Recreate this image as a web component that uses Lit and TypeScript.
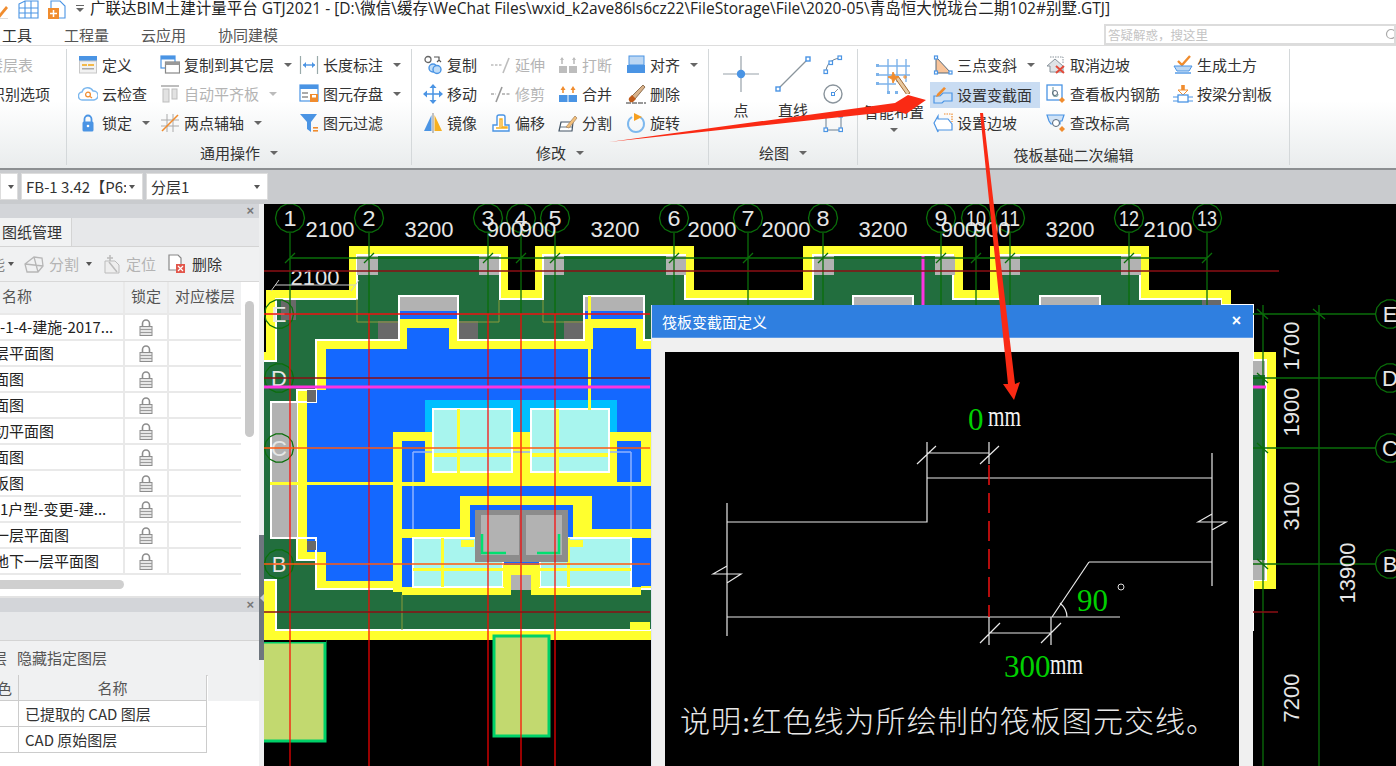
import { LitElement, html, svg, css } from "lit";
import { customElement } from "lit/decorators.js";
import { classMap } from "lit/directives/class-map.js";

const CJK = css`"Noto Sans CJK SC", "Liberation Sans", sans-serif`;

/* ------------------------------ ribbon icons ------------------------------ */
const BL = "#4a94e4";
const OR = "#f08c2e";
const GR = "#bdbdbd";

const ICONS: Record<string, unknown> = {
  def: svg`<rect x="1" y="1" width="18" height="5" fill="${BL}"/><rect x="1.5" y="6" width="17" height="12" fill="#f2f2f2" stroke="#c8c8c8"/><rect x="4" y="9" width="5" height="2" fill="#f3b94a"/><rect x="10" y="9" width="6" height="2" fill="#f3b94a"/><rect x="4" y="13" width="12" height="1.5" fill="#aaa"/>`,
  cloud: svg`<path d="M5 16 a4 4 0 0 1 -1 -8 a6 6 0 0 1 11 -1 a4.5 4.5 0 0 1 1 9 z" fill="#fff" stroke="#7db8ee" stroke-width="1.5"/><circle cx="10" cy="10.5" r="2.4" fill="none" stroke="${OR}" stroke-width="1.2"/><path d="M12 12.5 l2 1.5" stroke="${OR}" stroke-width="1.2"/>`,
  lock: svg`<path d="M6.5 9 V6 a3.5 3.5 0 0 1 7 0 V9" fill="none" stroke="${BL}" stroke-width="1.8"/><rect x="4.5" y="8.5" width="11" height="10" rx="1.5" fill="${BL}"/><circle cx="10" cy="13" r="1.3" fill="#fff"/>`,
  copyfloor: svg`<rect x="1" y="1" width="14" height="12" fill="#fff" stroke="${BL}" stroke-width="1.2"/><rect x="1" y="1" width="14" height="3.5" fill="${BL}"/><rect x="5.5" y="7" width="14" height="11" fill="#fff" stroke="#888" stroke-width="1.2"/><rect x="5.5" y="7" width="14" height="3" fill="#999"/>`,
  autoflush: svg`<rect x="1" y="1" width="18" height="2" fill="${GR}"/><rect x="3" y="5" width="6" height="13" fill="#e2e2e2" stroke="${GR}"/><rect x="12" y="5" width="5" height="10" fill="#e2e2e2" stroke="${GR}"/>`,
  twopoint: svg`<path d="M1 7 H19 M1 13 H19 M7 1 V19 M13 1 V19" stroke="#aaa" stroke-width="1"/><path d="M2 18 L18 2" stroke="${OR}" stroke-width="1.6"/>`,
  dimlen: svg`<path d="M1.5 1 V19 M18.5 1 V19" stroke="#9aa" stroke-width="1.2"/><path d="M4 10 H16" stroke="${BL}" stroke-width="1.4"/><path d="M4 10 l3 -3 v6 z M16 10 l-3 -3 v6 z" fill="${BL}"/>`,
  save: svg`<rect x="1" y="1" width="18" height="16" fill="#fff" stroke="${BL}" stroke-width="1.2"/><rect x="1" y="1" width="18" height="4" fill="${BL}"/><rect x="3" y="8" width="6" height="2" fill="#aaa"/><rect x="3" y="12" width="6" height="2" fill="#aaa"/><rect x="11" y="10" width="8" height="8" fill="${OR}"/><rect x="13" y="11" width="4" height="2.5" fill="#fff"/>`,
  filter: svg`<path d="M1 1 H18 L12 9 V19 L8 16 V9 Z" fill="${BL}"/><rect x="14" y="14" width="5" height="1.6" fill="${OR}"/><rect x="14" y="17" width="5" height="1.6" fill="${OR}"/>`,
  copy: svg`<circle cx="5" cy="4.5" r="3" fill="#fff" stroke="#666" stroke-width="1.3"/><path d="M11 2 h5 v3 M14 7 l2 -2 l2 2" fill="none" stroke="#555" stroke-width="1.2"/><circle cx="10" cy="13" r="4" fill="#bfdcf7" stroke="${BL}" stroke-width="1.4"/><circle cx="14" cy="14.5" r="4" fill="#bfdcf7" stroke="${BL}" stroke-width="1.4"/>`,
  move: svg`<path d="M10 3 V17 M3 10 H17" stroke="${BL}" stroke-width="1.5"/><path d="M10 0 l3.5 4 h-7 z M10 20 l3.5 -4 h-7 z M0 10 l4 -3.5 v7 z M20 10 l-4 -3.5 v7 z" fill="${BL}"/>`,
  mirror: svg`<path d="M8.5 2 V18 H1 Z" fill="${BL}"/><path d="M11.5 2 V18 H19 Z" fill="#f6b021"/><path d="M10 0 V20" stroke="#888" stroke-width="1"/>`,
  extend: svg`<path d="M0 10 H11" stroke="${GR}" stroke-width="1.4" stroke-dasharray="2.5 1.5"/><path d="M12 18 L18 3" stroke="${GR}" stroke-width="1.6"/>`,
  trim: svg`<path d="M0 10 H5 M11 10 H20" stroke="#aaa" stroke-width="1.4" stroke-dasharray="3 1.5"/><path d="M5 18 L11 3" stroke="#999" stroke-width="1.6"/>`,
  offset: svg`<path d="M2 12 H6 V4 a2 2 0 0 1 2 -2 h4 a2 2 0 0 1 2 2 V12 h4 v6 H2 Z" fill="#fff" stroke="${BL}" stroke-width="1.4"/><path d="M5 15 H16 V14 H11 V6 H9 V14" fill="none" stroke="#f6b021" stroke-width="1.4"/>`,
  breakl: svg`<rect x="1" y="11" width="8" height="7" fill="${GR}"/><rect x="11" y="11" width="8" height="7" fill="${GR}"/><path d="M4 9 V3 M16 9 V3" stroke="${GR}" stroke-width="1.6"/><path d="M2 5 l2 -3 l2 3 M14 5 l2 -3 l2 3" fill="${GR}"/>`,
  merge: svg`<rect x="1" y="11" width="18" height="7" fill="${BL}"/><path d="M10 11 V18" stroke="#fff"/><path d="M5 4 V9 M15 4 V9" stroke="${OR}" stroke-width="1.5"/><path d="M2.5 6 l2.5 -4 l2.5 4 z M12.5 6 l2.5 -4 l2.5 4 z" fill="${OR}"/>`,
  split: svg`<path d="M1 18 L3 9 H15 L14 18 Z" fill="#fff" stroke="#456" stroke-width="1.2"/><path d="M2 14 H15" stroke="#456" stroke-width=".8"/><path d="M8 14 L17 3 l2 2 L11 15 Z" fill="#f3c07a" stroke="#a86" stroke-width=".8"/>`,
  align: svg`<rect x="3" y="1" width="15" height="9" fill="#bcd7f3" stroke="${BL}"/><rect x="1" y="10" width="18" height="8" fill="${BL}"/>`,
  erase: svg`<path d="M6 12 L17 1 l2 2 L9 15 Z" fill="#d9b28a" stroke="#7a5a3a" stroke-width=".8"/><path d="M3 14 l3 -3 l4 4 l-3 3 a3 3 0 0 1 -4 -4 Z" fill="#c05a18"/><path d="M0 19 H20" stroke="#333" stroke-width="1" stroke-dasharray="5 1"/>`,
  rotate: svg`<path d="M6 4 A8 8 0 1 0 14 4" fill="none" stroke="#7db8ee" stroke-width="2"/><path d="M8 0 L16 4 L8 8 Z" fill="#f6a021"/>`,
  arc: svg`<path d="M3 17 C3 10 8 4 17 3" fill="none" stroke="#6b7f90" stroke-width="1"/><g fill="#fff" stroke="${BL}" stroke-width="1.2"><rect x="1" y="15" width="3.5" height="3.5"/><rect x="6" y="6" width="3.5" height="3.5"/><rect x="15" y="1" width="3.5" height="3.5"/></g>`,
  circle: svg`<circle cx="10" cy="10" r="9" fill="#fff" stroke="#8a949c" stroke-width="1.4"/><path d="M10 10 L15 5" stroke="#8a949c"/><rect x="8.5" y="8.5" width="3" height="3" fill="#fff" stroke="${BL}"/>`,
  rect: svg`<path d="M3 2 V17 H18 V2" fill="none" stroke="#6b7f90" stroke-width="1"/><g fill="#fff" stroke="${BL}" stroke-width="1.2"><rect x="1" y="15" width="3.5" height="3.5"/><rect x="16" y="15" width="3.5" height="3.5"/><rect x="16" y="0.5" width="3.5" height="3.5"/></g>`,
  tri: svg`<path d="M3 2 V18 H18 Z" fill="#f8c49a" stroke="#567" stroke-width="1"/><g fill="#fff" stroke="${BL}" stroke-width="1.2"><rect x="1.5" y="1" width="3" height="3"/><rect x="1.5" y="16" width="3" height="3"/><rect x="16" y="16" width="3" height="3"/></g>`,
  varsec: svg`<path d="M1 11 H7 L10 8 H19 V16 H11 L9 18 H1 Z" fill="#cfe2f6" stroke="${BL}" stroke-width="1.2"/><path d="M4 9 L11 2 l2 1.5 L6 11 l-3 1 Z" fill="${OR}"/>`,
  slope: svg`<path d="M1 10 L5 3 V6 H15 L19 11 V17 H5 V19 Z" fill="#fff" stroke="${BL}" stroke-width="1.2"/><path d="M11 1 H19 V9" fill="none" stroke="${OR}" stroke-width="1.2" stroke-dasharray="1.5 1"/>`,
  noslope: svg`<path d="M1 11 L9 4 L17 11 V17 H4 V11 Z" fill="#dfe3e6" stroke="#8a949c" stroke-width="1"/><path d="M4 2 H17 V8" fill="none" stroke="#8a949c" stroke-dasharray="1.5 1"/><path d="M10 11 L18 18 M18 11 L10 18" stroke="#e34a3a" stroke-width="2"/>`,
  rebar: svg`<rect x="1" y="1" width="15" height="15" fill="#fff" stroke="${BL}" stroke-width="1.3"/><path d="M7 3 V10 a2.5 2.5 0 0 0 5 0" fill="none" stroke="#8aa" stroke-width="1.2"/><circle cx="9" cy="9" r="2.5" fill="none" stroke="#567"/><path d="M16 13 l3 3 l-3 3 l-3 -3 z" fill="${OR}"/>`,
  elev: svg`<path d="M1 2 H18 L16 8 H14 V11 H5 L3 8 Z" fill="#cfe2f6" stroke="${BL}" stroke-width="1.2"/><circle cx="10" cy="10" r="3.5" fill="#fff" stroke="#567"/><path d="M16 13 l3 3 l-3 3 l-3 -3 z" fill="${OR}"/>`,
  earth: svg`<path d="M5 6 L9 10 L17 1" fill="none" stroke="${OR}" stroke-width="2.4"/><path d="M1 11 H19 L16 16 H4 Z" fill="#bcd7f3" stroke="${BL}"/><path d="M2 18 H18" stroke="${BL}" stroke-width="1.4"/>`,
  beamsplit: svg`<path d="M10 1 V8" stroke="${OR}" stroke-width="3.6"/><path d="M5 6 H15 L10 11 Z" fill="#fff" stroke="${OR}"/><rect x="5" y="11" width="10" height="7" fill="#fff" stroke="${BL}" stroke-width="1.3"/><path d="M0 13 H5 M15 13 H20 M0 17 H5 M15 17 H20" stroke="${BL}"/>`,
  gridwand: svg`<g stroke="#7db3ea" stroke-width="1.4" fill="none"><path d="M2 8 H34 M2 17 H34 M2 26 H20 M12 1 V36 M21 1 V24 M30 1 V24"/></g><g fill="#7db3ea"><rect x="0" y="6" width="3" height="3"/><rect x="0" y="15" width="3" height="3"/><rect x="0" y="24" width="3" height="3"/><rect x="11" y="33" width="3" height="3"/><rect x="19" y="33" width="3" height="3"/></g><path d="M22 18 L34 35 l-3 2 L19 20 Z" fill="#e8c9a0" stroke="#a26a34"/><path d="M17 14 l2 4 l4 1 l-4 2 l-2 4 l-1 -4 l-4 -2 l4 -1 z M27 19 h4 M29 17 v4" fill="${OR}" stroke="${OR}"/>`,
  point: svg`<path d="M18 0 V36 M0 18 H36" stroke="#98a2aa" stroke-width="1.2"/><circle cx="18" cy="18" r="4.2" fill="${BL}"/>`,
  line: svg`<path d="M3 33 L33 3" stroke="#8a949c" stroke-width="1.2"/><g fill="#fff" stroke="${BL}" stroke-width="1.4"><rect x="1" y="31" width="4" height="4"/><rect x="31" y="1" width="4" height="4"/></g>`,
  docgrey: svg`<path d="M3 18 L1 10 L10 3 L18 4 L19 12 L14 18 Z M1 10 L19 12 M10 3 L14 18" fill="none" stroke="#b6b6b6" stroke-width="1.3"/>`,
  locate: svg`<path d="M4 7 H14 L18 11 V19 H4 Z" fill="#eee" stroke="#bbb"/><path d="M8 8 L16 18 M6 4 H12 M9 1 V7" stroke="#bbb" stroke-width="1.5"/>`,
  del: svg`<path d="M2 1 H11 L14 4 V16 H2 Z" fill="#fff" stroke="#888" stroke-width="1.2"/><rect x="9" y="10" width="9" height="9" fill="#e2574c"/><path d="M11 12 l5 5 M16 12 l-5 5" stroke="#fff" stroke-width="1.2"/>`,
};

type Item = { i: string; t: string; c?: boolean; off?: boolean; on?: boolean };

const COMMON: Item[][] = [
  [{ i: "def", t: "定义" }, { i: "cloud", t: "云检查" }, { i: "lock", t: "锁定", c: true }],
  [{ i: "copyfloor", t: "复制到其它层", c: true }, { i: "autoflush", t: "自动平齐板", c: true, off: true }, { i: "twopoint", t: "两点辅轴", c: true }],
  [{ i: "dimlen", t: "长度标注", c: true }, { i: "save", t: "图元存盘", c: true }, { i: "filter", t: "图元过滤" }],
];
const MODIFY: Item[][] = [
  [{ i: "copy", t: "复制" }, { i: "move", t: "移动" }, { i: "mirror", t: "镜像" }],
  [{ i: "extend", t: "延伸", off: true }, { i: "trim", t: "修剪", off: true }, { i: "offset", t: "偏移" }],
  [{ i: "breakl", t: "打断", off: true }, { i: "merge", t: "合并" }, { i: "split", t: "分割" }],
  [{ i: "align", t: "对齐", c: true }, { i: "erase", t: "删除" }, { i: "rotate", t: "旋转" }],
];
const RAFT: Item[][] = [
  [{ i: "tri", t: "三点变斜", c: true }, { i: "varsec", t: "设置变截面", on: true }, { i: "slope", t: "设置边坡" }],
  [{ i: "noslope", t: "取消边坡" }, { i: "rebar", t: "查看板内钢筋" }, { i: "elev", t: "查改标高" }],
  [{ i: "earth", t: "生成土方" }, { i: "beamsplit", t: "按梁分割板" }],
];

const ico = (name: string, size = 20) =>
  html`<svg class="ico" width=${size} height=${size} viewBox="0 0 ${size} ${size}">${ICONS[name]}</svg>`;

@customElement("ribbon-bar")
class RibbonBar extends LitElement {
  static styles = css`
    :host {
      display: flex;
      height: 122px;
      box-sizing: border-box;
      padding-top: 3px;
      background: linear-gradient(#fff 0%, #fff 45%, #e9eced 100%);
      font: 15px/20px ${CJK};
      color: #333;
      overflow: hidden;
    }
    .grp {
      display: flex;
      flex-direction: column;
      flex: none;
      height: 116px;
      box-sizing: border-box;
      padding-top: 1px;
      border-right: 1px solid #d4d8da;
    }
    .first { width: 67px; }
    .common { width: 345px; padding-left: 11px; }
    .modify { width: 297px; padding-left: 11px; }
    .draw { width: 149px; }
    .raft { width: 432px; }
    .cols { display: grid; flex: none; height: 87px; }
    .common .cols { grid-template-columns: 82px 139px 1fr; }
    .modify .cols { grid-template-columns: 68px 67px 68px 1fr; }
    .draw .cols { grid-template-columns: 64px 40px 1fr; }
    .raft .cols { grid-template-columns: 72px 113px 127px 1fr; }
    .col { display: flex; flex-direction: column; }
    .item {
      display: flex;
      align-items: center;
      gap: 4px;
      height: 29px;
      white-space: nowrap;
    }
    .raft .item { padding-left: 3px; }
    .off { color: #b4b4b4; }
    .on { background: #c9dcf2; margin: 3px 3px 0 0; height: 26px; }
    .ico { flex: none; display: block; }
    .caret {
      width: 0;
      height: 0;
      margin-left: 6px;
      border: 4px solid transparent;
      border-top: 4px solid #666;
      border-bottom: 0;
    }
    .off .caret { border-top-color: #bbb; }
    .label {
      flex: none;
      display: flex;
      align-items: center;
      justify-content: center;
      gap: 4px;
      height: 24px;
      margin-top: 4px;
    }
    .common .label, .modify .label { margin-left: -11px; }
    .raft .label { margin-top: 6px; }
    .clip1 { margin-left: -12px; color: #b4b4b4; }
    .clip2 { margin-left: -10px; }
    .big {
      display: flex;
      flex-direction: column;
      align-items: center;
    }
    .big .ico { margin-top: 6px; }
    .big span { margin-top: 8px; }
    .smalls .item { padding-left: 10px; }
    .wand .ico { margin-top: 8px; }
    .wand .caret { margin: 6px 0 0; }
  `;

  private column(items: Item[]) {
    return html`<div class="col">
      ${items.map(
        (it) => html`<div class=${classMap({ item: true, off: !!it.off, on: !!it.on })}>
          ${ico(it.i)}<span>${it.t}</span>${it.c ? html`<i class="caret"></i>` : ""}
        </div>`
      )}
    </div>`;
  }

  render() {
    return html`
      <div class="grp first">
        <div class="item clip1">楼层表</div>
        <div class="item clip2">识别选项</div>
      </div>
      <div class="grp common">
        <div class="cols">${COMMON.map((c) => this.column(c))}</div>
        <div class="label">通用操作<i class="caret"></i></div>
      </div>
      <div class="grp modify">
        <div class="cols">${MODIFY.map((c) => this.column(c))}</div>
        <div class="label">修改<i class="caret"></i></div>
      </div>
      <div class="grp draw">
        <div class="cols">
          <div class="big">${ico("point", 36)}<span>点</span></div>
          <div class="big">${ico("line", 36)}<span>直线</span></div>
          <div class="col smalls">
            <div class="item">${ico("arc")}</div>
            <div class="item">${ico("circle")}</div>
            <div class="item">${ico("rect")}</div>
          </div>
        </div>
        <div class="label">绘图<i class="caret"></i></div>
      </div>
      <div class="grp raft">
        <div class="cols">
          <div class="big wand">${ico("gridwand", 36)}<span>智能布置</span><i class="caret"></i></div>
          ${RAFT.map((c) => this.column(c))}
        </div>
        <div class="label">筏板基础二次编辑</div>
      </div>
    `;
  }
}

/* ------------------------------ left panels ------------------------------ */
const DRAWINGS = [
  "-1-4-建施-2017...", "层平面图", "面图", "面图", "切平面图",
  "面图", "板图", "1户型-变更-建...", "一层平面图", "地下一层平面图",
];

const lockIcon = html`<svg width="14" height="17" viewBox="0 0 14 17">
  <path d="M3.5 8 V4.5 a3.5 3.5 0 0 1 7 0 V8" fill="none" stroke="#8d8d8d" stroke-width="1.6"/>
  <rect x="1" y="7.5" width="12" height="9" fill="#e6e6e6" stroke="#8d8d8d"/>
  <path d="M1 10.5 H13 M1 13.5 H13" stroke="#9c9c9c"/>
</svg>`;

@customElement("side-panels")
class SidePanels extends LitElement {
  static styles = css`
    :host {
      display: flex;
      flex-direction: column;
      width: 259px;
      flex: none;
      font: 15px/20px ${CJK};
      color: #222;
      background: #fff;
    }
    .panel { display: flex; flex-direction: column; overflow: hidden; }
    .top { height: 394px; border-bottom: 2px solid #e3e3e3; box-sizing: border-box; }
    .bottom { flex: 1; }
    .head {
      flex: none;
      display: flex;
      justify-content: flex-end;
      align-items: center;
      height: 14px;
      padding-right: 5px;
      background: #d3d5d9;
      color: #777;
      font: bold 13px/14px "Liberation Sans", sans-serif;
    }
    .tabs { flex: none; display: flex; height: 28px; background: #e7e8ea; border-bottom: 1px solid #d4d4d4; }
    .tab {
      width: 72px;
      box-sizing: border-box;
      padding: 4px 0 0 2px;
      background: #f1f2f3;
      border-right: 1px solid #d4d4d4;
      color: #333;
    }
    .tools {
      flex: none;
      display: flex;
      align-items: center;
      height: 34px;
      background: #f0f1f2;
      border-bottom: 1px solid #d8d8d8;
      color: #b4b4b4;
      white-space: nowrap;
    }
    .tools .ico { margin-right: 5px; }
    .tools i {
      width: 0;
      height: 0;
      border: 3.5px solid transparent;
      border-top: 4px solid #555;
      border-bottom: 0;
    }
    .cut { margin-left: -10px; color: #888; }
    .t1 { margin-left: 3px; }
    .t2 { margin-left: 10px; }
    .t3 { margin-left: 7px; }
    .t4 { margin-left: 9px; }
    .t5 { margin-left: 11px; }
    .dark { color: #333; }
    .hidebar { color: #555; margin-left: -8px; }
    .bodywrap { flex: 1; display: flex; position: relative; }
    .tbl { width: 241px; flex: none; }
    .row {
      display: grid;
      grid-template-columns: 125px 44px 1fr;
      height: 26px;
      box-sizing: border-box;
      border-bottom: 2px solid #e9e9e9;
      align-items: center;
      white-space: nowrap;
      overflow: hidden;
    }
    .row > * { height: 100%; display: flex; align-items: center; border-right: 2px solid #e9e9e9; box-sizing: border-box; }
    .row > :last-child { border-right: 0; }
    .hdr { height: 33px; background: #f0f1f2; color: #555; }
    .hdr > * { padding-bottom: 3px; }
    .hdr .n { padding-left: 2px; }
    .mid { justify-content: center; }
    .floors { padding-left: 6px; }
    .n2 { margin-left: -6px; }
    .n2.whole { margin-left: 0; }
    .vbar { width: 9px; height: 136px; margin: 19px 0 0 4px; border-radius: 5px; background: #c9c9c9; }
    .hbar { width: 124px; height: 9px; margin-top: 5px; border-radius: 0 5px 5px 0; background: #cfcfcf; }
    .grid2 {
      display: grid;
      grid-template-columns: 19px 188px;
      grid-auto-rows: 26px;
      width: 208px;
      position: relative;
      color: #333;
    }
    .grid2 div {
      display: flex;
      align-items: center;
      box-sizing: border-box;
      border-right: 1px solid #ccc;
      border-bottom: 1px solid #ccc;
      padding-left: 6px;
      white-space: nowrap;
    }
    .grid2 .clipc { padding-left: 0; justify-content: flex-end; overflow: hidden; }
    .grid2 .th { background: #f0f1f2; color: #555; justify-content: center; padding-left: 0; }
    .grid2 .th.clipc { justify-content: flex-end; padding-right: 6px; }
    .strip { height: 26px; background: #f0f1f2; flex: 1; }
    .wrap2 { display: flex; align-items: flex-start; margin-top: -1px; }
  `;

  render() {
    return html`
      <section class="panel top">
        <div class="head">×</div>
        <div class="tabs"><div class="tab">图纸管理</div></div>
        <div class="tools">
          <span class="cut">能</span><i class="t1"></i>
          <svg class="ico t2" width="20" height="20" viewBox="0 0 20 20">${ICONS.docgrey}</svg>分割<i class="t3"></i>
          <svg class="ico t4" width="20" height="20" viewBox="0 0 20 20">${ICONS.locate}</svg>定位
          <svg class="ico t5" width="20" height="20" viewBox="0 0 20 20">${ICONS.del}</svg><span class="dark">删除</span>
        </div>
        <div class="bodywrap">
          <div class="tbl">
            <div class="row hdr">
              <span class="n">名称</span><span class="mid">锁定</span><span class="floors">对应楼层</span>
            </div>
            ${DRAWINGS.map(
              (d) => html`<div class="row"><span><span class=${classMap({ n2: true, whole: /^[-\d]/.test(d) })}>${d}</span></span><span class="mid">${lockIcon}</span><span></span></div>`
            )}
            <div class="hbar"></div>
          </div>
          <div class="vbar"></div>
        </div>
      </section>
      <section class="panel bottom">
        <div class="head">×</div>
        <div class="tabs"></div>
        <div class="tools"><span class="hidebar">层&nbsp;&nbsp;&nbsp;隐藏指定图层</span></div>
        <div class="wrap2">
          <div class="grid2">
            <div class="th clipc">色</div><div class="th">名称</div>
            <div class="clipc"></div><div>已提取的 CAD 图层</div>
            <div class="clipc"></div><div>CAD 原始图层</div>
          </div>
          <div class="strip"></div>
        </div>
      </section>
    `;
  }
}

/* ------------------------------ CAD canvas ------------------------------ */
const AXES: [string, number][] = [
  ["1", 290], ["2", 369], ["3", 488], ["4", 521], ["5", 555], ["6", 674], ["7", 748],
  ["8", 823], ["9", 941], ["10", 976], ["11", 1010], ["12", 1129], ["13", 1207],
];
const TOP_DIMS: [string, number][] = [
  ["2100", 330], ["3200", 429], ["900", 505], ["900", 538], ["3200", 615], ["2000", 712],
  ["2000", 786], ["3200", 883], ["900", 959], ["900", 992], ["3200", 1070], ["2100", 1168],
];
const GREY_POCKETS = [357, 478, 543, 665, 813, 934, 999, 1120];
const ROW_AXES: [string, number][] = [["E", 314], ["D", 378], ["C", 448], ["B", 564]];

const bubble = (cx: number, cy: number, r = 14.5) =>
  Array.from({ length: 14 }, (_, i) => {
    const a = (i * Math.PI) / 7;
    return `${(cx + r * Math.cos(a)).toFixed(1)},${(cy + r * Math.sin(a)).toFixed(1)}`;
  }).join(" ");

const rects = (list: number[][], fill: string) =>
  list.map(([x, y, w, h]) => svg`<rect x=${x} y=${y} width=${w} height=${h} fill=${fill}/>`);

const OUTER = "349,246 508,246 508,290 535,290 535,246 694,246 694,290 803,290 803,246 963,246 963,290 990,290 990,246 1149,246 1149,290 1231,290 1231,305 1253,305 1253,352 1276,352 1276,589 1253,589 1253,640 264,640 264,352 266,352 266,290 349,290";
const GREEN = "357,255 500,255 500,299 543,299 543,255 685,255 685,299 813,299 813,255 953,255 953,299 1000,299 1000,255 1140,255 1140,299 1221,299 1221,305 1253,305 1253,360 1266,360 1266,580 1253,580 1253,630 276,630 276,580 262,580 262,361 276,361 276,299 357,299";
const INNER_YELLOW = "316,340 399,340 399,296 458,296 458,340 584,340 584,296 644,296 644,340 660,340 660,589 316,589 316,560 297,560 297,390 316,390";
const BLUE = "326,349 407,349 407,328 449,328 449,349 593,349 593,328 636,328 636,349 660,349 660,586 402,586 402,581 326,581 326,552 307,552 307,390 326,390";

@customElement("cad-plan")
class CadPlan extends LitElement {
  static styles = css`
    :host { display: block; width: 100%; height: 100%; }
    svg { display: block; }
    text { font-family: "Liberation Sans", sans-serif; }
  `;

  render() {
    return html`<svg width="1132" height="562" viewBox="264 204 1132 562">
      <rect x="264" y="204" width="1132" height="562" fill="#000"/>
      <polygon points=${OUTER} fill="#ffff2e"/>
      <polygon points=${GREEN} fill="#226e3e" stroke="#fff" stroke-width="2"/>
      ${rects([[357, 256, 21, 19], [1253, 361, 12, 14], [1253, 560, 12, 20]], "#b2b2b2")}
      ${GREY_POCKETS.map((x) => svg`<rect x=${x + 1} y="256" width="20" height="19" fill="#b2b2b2"/>`)}
      ${rects([[281, 300, 15, 20], [378, 321, 20, 18], [459, 321, 19, 18], [564, 321, 20, 18], [1202, 300, 19, 5]], "#696969")}
      <path d="M357 299 V322 H399 M499 300 V322 H459 M543 300 V322 H584 M402 595 V630" fill="none" stroke="#8a9a3a"/>
      <path d="M923 256 V305" stroke="#ff33e0" stroke-width="3"/>
      ${rects([[853, 296, 60, 9], [1040, 296, 60, 9]], "#b2b2b2")}
      <path d="M853 305 V296 H913 V305 M1040 305 V296 H1100 V305" fill="none" stroke="#fff" stroke-width="2"/>

      <polygon points=${INNER_YELLOW} fill="#ffff2e" stroke="#fff" stroke-width="2"/>
      ${rects([[400, 297, 57, 14], [585, 297, 58, 14]], "#b2b2b2")}
      ${rects([[400, 311, 57, 8], [585, 311, 58, 8]], "#1468ff")}
      <polygon points=${BLUE} fill="#1468ff"/>
      <rect x="271" y="402" width="26" height="136" fill="#b2b2b2"/>
      <path d="M316 390 V402 H271 V538 H316 V560" fill="none" stroke="#fff" stroke-width="2"/>
      ${rects([[307, 390, 9, 12], [307, 541, 9, 9]], "#696969")}

      <rect x="425" y="400" width="192" height="32" fill="#00bfff"/>
      ${rects([[393, 432, 267, 54], [393, 432, 9, 160], [393, 529, 67, 9], [592, 529, 68, 9], [460, 496, 122, 9], [460, 496, 10, 50], [573, 496, 19, 50], [402, 587, 109, 8], [531, 587, 110, 8]], "#ffff2e")}
      ${rects([[402, 441, 23, 41], [617, 441, 24, 41], [402, 486, 58, 43], [592, 486, 49, 43], [470, 505, 103, 30], [402, 538, 11, 49], [631, 538, 10, 49]], "#1468ff")}
      <path d="M413 452 H631 M413 452 V529 M631 452 V529" fill="none" stroke="#8fb2ff" stroke-width="1.5"/>
      <g fill="#a8f5ee" stroke="#fff" stroke-width="2">
        <rect x="433" y="409" width="79" height="63"/>
        <rect x="531" y="409" width="78" height="63"/>
        <rect x="413" y="538" width="90" height="49"/>
        <rect x="540" y="538" width="91" height="49"/>
      </g>
      ${rects([[434, 453, 77, 4], [532, 453, 76, 4], [457, 409, 3, 64], [556, 409, 3, 64], [588, 296, 3, 114], [413, 568, 218, 3], [441, 538, 3, 49], [567, 538, 3, 49], [461, 540, 13, 7], [570, 540, 13, 7], [503, 565, 37, 22], [402, 482, 239, 4], [270, 482, 123, 3]], "#ffff2e")}
      <rect x="475" y="510" width="93" height="52" fill="#8c8c8c"/>
      ${rects([[481, 515, 38, 40], [526, 515, 36, 40], [511, 575, 20, 15]], "#b2b2b2")}
      <path d="M482 534 V553 H506 M559 534 V553 H537" fill="none" stroke="#00e070" stroke-width="2.5"/>
      <rect x="630" y="622" width="20" height="8" fill="#ffff2e"/>

      <g fill="#c2d96f" stroke-width="3">
        <rect x="260" y="642" width="65" height="99" stroke="#00d068"/>
        <rect x="494" y="636" width="55" height="100" stroke="#00d068"/>
      </g>
      <rect x="260" y="640" width="66" height="2" fill="#000"/>

      <!-- grid -->
      <g stroke="#0a6e0a" stroke-width="1.3" fill="none">
        ${AXES.map(([, x]) => svg`<path d="M${x} 233 V314 M${x - 5} 263 L${x + 5} 253"/><polygon points=${bubble(x, 218)}/>`)}
        <path d="M290 258 H1207"/>
        ${ROW_AXES.map(([, y]) => svg`<path d="M1253 ${y} H1375 M1257 ${y - 5} L1268 ${y + 5}"/><polygon points=${bubble(1390, y)}/><polygon points=${bubble(279, y)}/>`)}
        <path d="M1263 305 V766 M1319 305 V766 M1313 309 L1325 319"/>
      </g>
      <g fill="#e6e6e6" font-size="22" text-anchor="middle">
        ${AXES.map(([n, x]) => svg`<text x=${x} y="226" textLength=${n.length > 1 ? 20 : 13} lengthAdjust="spacingAndGlyphs">${n}</text>`)}
        ${TOP_DIMS.map(([n, x]) => svg`<text x=${x} y="237">${n}</text>`)}
        ${ROW_AXES.map(([n, y]) => svg`<text x="279" y=${y + 8}>${n}</text><text x="1390" y=${y + 8}>${n}</text>`)}
        <text x="315" y="285">2100</text>
        <g transform="translate(1299 346) rotate(-90)"><text>1700</text></g>
        <g transform="translate(1299 412) rotate(-90)"><text>1900</text></g>
        <g transform="translate(1299 506) rotate(-90)"><text>3100</text></g>
        <g transform="translate(1355 573) rotate(-90)"><text>13900</text></g>
        <g transform="translate(1299 698) rotate(-90)"><text>7200</text></g>
      </g>
      <path d="M275 285 H355 M271 291 L279 280 M351 291 L359 280" stroke="#ccc" fill="none"/>

      <!-- red construction lines -->
      <g stroke="#f00" stroke-width="1.6" opacity=".75" fill="none">
        <path d="M290 314 V766 M369 314 V766 M488 314 V766 M521 314 V766 M555 314 V766"/>
      </g>
      <path d="M264 271 H1279 M264 378 H650 M264 612 H650 M1253 612 H1278" stroke="#8a0f14" stroke-width="1.4"/>
      <path d="M264 314 H650" stroke="#f01010" stroke-width="1.5"/>
      <path d="M264 448 H650 M264 564 H650" stroke="#ff5a10" stroke-width="1.6"/>
      <path d="M264 387 H650" stroke="#ff33e0" stroke-width="3"/>
      <path d="M1253 387 H1266" stroke="#ff33e0" stroke-width="3"/>
    </svg>`;
  }
}

/* ------------------------------ section dialog ------------------------------ */
const SECTION_LINES =
  "M927 442 V478 H1212 M927 478 V522 H727 M727 503 V636 M727 617 H1120 M1212 453 V586 M1089 562 H1212 M1089 562 L1052 617 M927 453 H989 M917 464 L936 446 M980 464 L999 446 M989 442 V464 M989 617 V645 M1051 617 V645 M989 633 H1051 M980 643 L1000 623 M1041 643 L1061 623 M1060 603 Q1067 609 1067 617 M713 574 L727 566 V583 L741 574 Z M1198 522 L1212 514 V530 L1226 522 Z";

@customElement("section-dialog")
class SectionDialog extends LitElement {
  static styles = css`
    :host {
      display: flex;
      flex-direction: column;
      background: #f0f0f0;
      box-sizing: border-box;
      border-left: 1px solid #dfe6f0;
    }
    .bar {
      flex: none;
      display: flex;
      align-items: center;
      justify-content: space-between;
      height: 33px;
      box-sizing: border-box;
      padding: 0 12px 0 10px;
      background: #2f7fe0;
      border-bottom: 1px solid #5d9ae6;
      color: #fff;
      font: 15px ${CJK};
    }
    .x { font: bold 16px "Liberation Sans", sans-serif; }
    .body { flex: 1; padding: 14px 14px 0 13px; min-height: 0; }
    svg { display: block; }
    .num { font-family: "Liberation Serif", serif; font-size: 31px; fill: #00d000; }
    .unit { font-family: "Liberation Serif", serif; font-size: 30px; fill: #f2f2f2; }
    .note { font-family: "Liberation Serif", "Noto Sans CJK SC", serif; font-size: 30px; fill: #e8e8e8; font-weight: 300; }
  `;

  render() {
    return html`
      <div class="bar"><span>筏板变截面定义</span><span class="x">×</span></div>
      <div class="body">
        <svg width="574" height="414" viewBox="665 352 574 414">
          <rect x="665" y="352" width="574" height="414" fill="#000"/>
          <path d=${SECTION_LINES} fill="none" stroke="#e8e8e8" stroke-width="1.2"/>
          <path d="M989 465 V617" stroke="#f01010" stroke-width="1.5" stroke-dasharray="20 8"/>
          <circle cx="1121" cy="587" r="3" fill="none" stroke="#ddd"/>
          <text class="num" x="968" y="430">0</text>
          <text class="unit" x="988" y="426" textLength="33" lengthAdjust="spacingAndGlyphs">mm</text>
          <text class="num" x="1077" y="611">90</text>
          <text class="num" x="1004" y="677">300</text>
          <text class="unit" x="1050" y="674" textLength="33" lengthAdjust="spacingAndGlyphs">mm</text>
          <text class="note" x="680" y="732" textLength="536">说明:红色线为所绘制的筏板图元交线。</text>
        </svg>
      </div>
    `;
  }
}

/* ------------------------------ page ------------------------------ */
@customElement("app-root")
class AppRoot extends LitElement {
  static styles = css`
    :host {
      display: flex;
      flex-direction: column;
      position: relative;
      width: 1396px;
      height: 766px;
      overflow: hidden;
      background: #fff;
      font: 15px ${CJK};
      color: #333;
    }
    .title {
      flex: none;
      display: flex;
      align-items: flex-start;
      height: 20px;
      white-space: nowrap;
      font: 15.5px/17px "Open Sans", ${CJK};
      color: #222;
    }
    .qa { display: flex; align-items: center; margin-left: -1px; gap: 9px; }
    .drop { width: 8px; height: 7px; margin: 5px 6px 0 10px; border-top: 1px solid #666; position: relative; }
    .drop::after { content: ""; display: block; margin: 2px 0 0 0; border: 4px solid transparent; border-top: 4px solid #666; border-bottom: 0; }
    .menu {
      flex: none;
      display: flex;
      align-items: center;
      height: 26px;
      box-sizing: border-box;
      padding-top: 4px;
      border-bottom: 1px solid #ddd;
      color: #555;
    }
    .menu span { margin-left: 32px; }
    .menu span:first-child { margin-left: 2px; color: #333; }
    .search {
      margin-left: auto;
      display: flex;
      align-items: center;
      justify-content: space-between;
      width: 292px;
      height: 21px;
      box-sizing: border-box;
      border: 2px solid #dcdcdc;
      padding: 0 0 0 2px;
      color: #c4c4c4;
      font-size: 12.5px;
    }
    ribbon-bar { flex: none; }
    .edge { flex: none; height: 2px; background: #8c8f92; }
    .sub {
      flex: none;
      display: flex;
      align-items: flex-start;
      gap: 3px;
      height: 34px;
      box-sizing: border-box;
      padding-top: 3px;
      background: #c9cbce;
    }
    .combo {
      display: flex;
      align-items: center;
      justify-content: space-between;
      box-sizing: border-box;
      width: 122px;
      height: 27px;
      padding: 0 7px 0 4px;
      background: #fff;
      border: 1px solid #ddd;
      white-space: nowrap;
      overflow: hidden;
      color: #333;
    }
    .combo.stub { width: 18px; }
    .combo span { overflow: hidden; }
    .combo i {
      flex: none;
      width: 0;
      height: 0;
      margin-left: 3px;
      border: 3.5px solid transparent;
      border-top: 4px solid #555;
      border-bottom: 0;
    }
    .main { flex: 1; display: flex; min-height: 0; position: relative; }
    .splitter { flex: none; width: 5px; background: #eeeff0; display: flex; align-items: flex-start; }
    .handle { display: flex; align-items: center; justify-content: center; width: 5px; height: 125px; margin-top: 331px; background: #6e767e; }
    .handle i { width: 0; height: 0; border: 4px solid transparent; border-right: 4px solid #c9ced2; border-left: 0; }
    .canvas { flex: 1; position: relative; min-width: 0; overflow: hidden; }
    section-dialog { position: absolute; left: 387px; top: 101px; width: 602px; bottom: 0; }
    .arrows { position: absolute; inset: 0; pointer-events: none; }
  `;

  render() {
    return html`
      <div class="title">
        <div class="qa">
          <svg width="10" height="18" viewBox="0 0 10 18"><path d="M-2 16 L7 5 l2 2 L0 18 Z" fill="#f08c2e"/><path d="M-2 18 H9" stroke="#bbb"/></svg>
          <svg width="21" height="19" viewBox="0 0 21 19"><path d="M1 4 L7 1 H20 V18 H1 Z M1 8 H20 M1 13 H20 M7 1 V18 M13 1 V18" fill="none" stroke="#4a94e4" stroke-width="1.1"/></svg>
          <svg width="18" height="19" viewBox="0 0 18 19"><path d="M3 9 V1 H12 L17 6 V18 H10" fill="none" stroke="#4a94e4" stroke-width="1.1"/><rect x="0" y="8" width="11" height="11" fill="#f08c2e"/><path d="M5.5 10 V17 M2 13.5 H9" stroke="#fff" stroke-width="1.5"/></svg>
        </div>
        <span class="drop"></span>
        <span>广联达BIM土建计量平台 GTJ2021 - [D:\\微信\\缓存\\WeChat Files\\wxid_k2ave86ls6cz22\\FileStorage\\File\\2020-05\\青岛恒大悦珑台二期102#别墅.GTJ]</span>
      </div>
      <div class="menu">
        <span>工具</span><span>工程量</span><span>云应用</span><span>协同建模</span>
        <div class="search">答疑解惑，搜这里
          <svg width="10" height="14" viewBox="0 0 10 14"><circle cx="7" cy="6" r="4.5" fill="none" stroke="#aaa" stroke-width="1.2"/></svg>
        </div>
      </div>
      <ribbon-bar></ribbon-bar>
      <div class="edge"></div>
      <div class="sub">
        <div class="combo stub"><i></i></div>
        <div class="combo"><span>FB-1 3.42【P6:</span><i></i></div>
        <div class="combo"><span>分层1</span><i></i></div>
      </div>
      <div class="main">
        <side-panels></side-panels>
        <div class="splitter"><div class="handle"><i></i></div></div>
        <div class="canvas">
          <cad-plan></cad-plan>
          <section-dialog></section-dialog>
        </div>
      </div>
      <svg class="arrows" width="1396" height="766" viewBox="0 0 1396 766">
        <polygon points="609,142 895,103 908,95 926,100 906,114 897,111" fill="#fa2a14"/>
        <polygon points="980,113 1008,384 1003,384 1014,400 1020,382 1015,384 983,113" fill="#fa2a14"/>
      </svg>
    `;
  }
}
